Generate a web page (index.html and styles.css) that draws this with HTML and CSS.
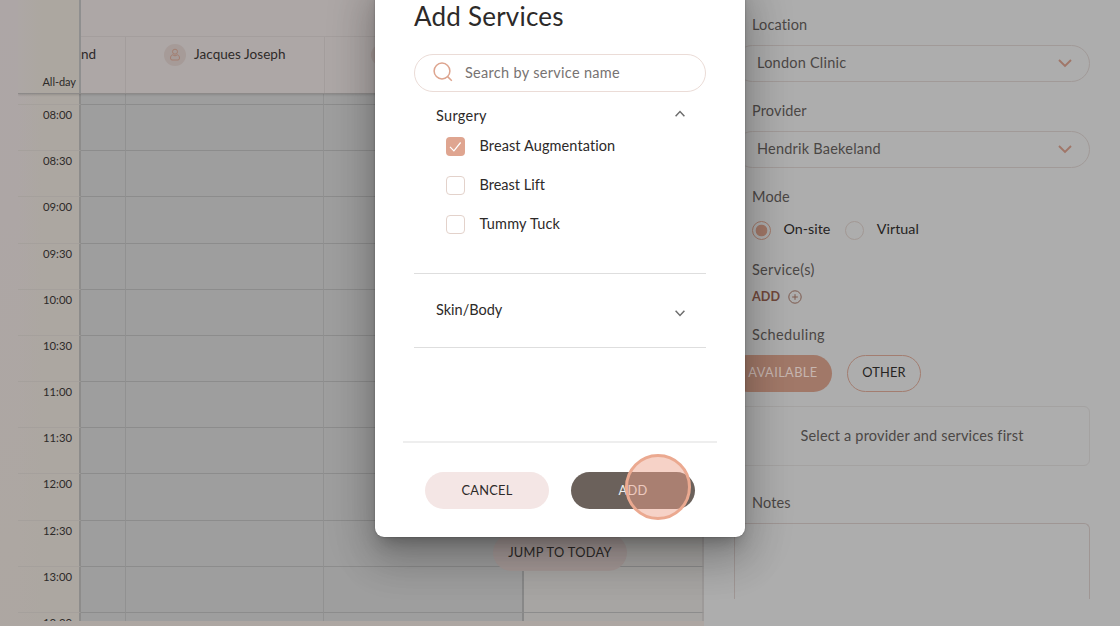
FILE: index.html
```html
<!DOCTYPE html>
<html lang="en">
<head>
<meta charset="utf-8">
<title>Add Services</title>
<link rel="stylesheet" href="styles.css">
</head>
<body>
<main class="app">
  <section class="calendar">
    <div class="cal-clip">
      <header class="cal-head">
        <div class="all-day">All-day</div>
        <div class="head-main">
          <div class="head-date"></div>
          <div class="head-people">
            <div class="person first"><span class="name">nd</span></div>
            <div class="person second">
              <span class="avatar"><svg viewBox="0 0 22 22"><circle cx="11" cy="7.7" r="2.5"/><path d="M8.6 10.8 C7.2 11.2 6.5 12.4 6.5 14 Q6.5 16 8 16 H14 Q15.500 16 15.500 14 C15.500 12.400 14.800 11.200 13.400 10.800 Q11 13 8.600 10.800Z"/></svg></span>
              <span class="name jj">Jacques Joseph</span>
            </div>
            <div class="person third"><span class="avatar"></span></div>
            <div class="person"></div>
          </div>
        </div>
      </header>
      <div class="row short"><span class="time"></span><i></i><i></i><i></i><i class="open"></i></div>
      <div class="row"><span class="time">08:00</span><i></i><i></i><i></i><i class="open"></i></div>
      <div class="row"><span class="time">08:30</span><i></i><i></i><i></i><i class="open"></i></div>
      <div class="row"><span class="time">09:00</span><i></i><i></i><i></i><i class="open"></i></div>
      <div class="row"><span class="time">09:30</span><i></i><i></i><i></i><i class="open"></i></div>
      <div class="row"><span class="time">10:00</span><i></i><i></i><i></i><i class="open"></i></div>
      <div class="row"><span class="time">10:30</span><i></i><i></i><i></i><i class="open"></i></div>
      <div class="row"><span class="time">11:00</span><i></i><i></i><i></i><i class="open"></i></div>
      <div class="row"><span class="time">11:30</span><i></i><i></i><i></i><i class="open"></i></div>
      <div class="row"><span class="time">12:00</span><i></i><i></i><i></i><i class="open"></i></div>
      <div class="row"><span class="time">12:30</span><i></i><i></i><i></i><i class="open"></i></div>
      <div class="row"><span class="time">13:00</span><i></i><i></i><i></i><i class="open"></i></div>
      <div class="row"><span class="time">13:30</span><i></i><i></i><i></i><i class="open"></i></div>
    </div>
    <button class="today">JUMP TO TODAY</button>
  </section>

  <aside class="panel">
    <div class="label l-location">Location</div>
    <div class="select"><span class="t-london">London Clinic</span><svg viewBox="0 0 14 9"><path d="M1 1 L7 7 L13 1"/></svg></div>
    <div class="label l-provider">Provider</div>
    <div class="select"><span class="t-hendrik">Hendrik Baekeland</span><svg viewBox="0 0 14 9"><path d="M1 1 L7 7 L13 1"/></svg></div>
    <div class="label l-mode">Mode</div>
    <div class="radios">
      <span class="radio on"></span><span class="r-text onsite">On-site</span>
      <span class="radio"></span><span class="r-text virtual">Virtual</span>
    </div>
    <div class="label l-services">Service(s)</div>
    <div class="add-link"><span>ADD</span><svg viewBox="0 0 14 14"><circle cx="7" cy="7" r="6.200"/><path d="M7 4.200 V9.800 M4.200 7 H9.800"/></svg></div>
    <div class="label l-sched">Scheduling</div>
    <div class="chips"><span class="chip filled">AVAILABLE</span><span class="chip">OTHER</span></div>
    <div class="hint"><span>Select a provider and services first</span></div>
    <div class="label l-notes">Notes</div>
    <div class="notes"></div>
  </aside>
</main>

<div class="modal">
  <h1>Add Services</h1>
  <div class="search"><svg viewBox="0 0 20 20"><circle cx="9" cy="9" r="7.900"/><path d="M14.600 14.600 L18.800 18.800"/></svg><span>Search by service name</span></div>
  <div class="group">
    <div class="group-head"><span class="g-surgery">Surgery</span><svg viewBox="0 0 10 8"><path d="M.6 6.200 L5 1.600 L9.400 6.200"/></svg></div>
    <div class="option"><span class="box checked"><svg viewBox="0 0 19 19"><path d="M4 9.800 L7.900 13.800 L14.600 5.500"/></svg></span><span class="o-aug">Breast Augmentation</span></div>
    <div class="option"><span class="box"></span><span class="o-lift">Breast Lift</span></div>
    <div class="option"><span class="box"></span><span class="o-tuck">Tummy Tuck</span></div>
  </div>
  <div class="group closed">
    <span class="g-skin">Skin/Body</span><svg viewBox="0 0 10 8"><path d="M.6 1.800 L5 6.400 L9.400 1.800"/></svg>
  </div>
  <div class="actions">
    <button class="btn cancel">CANCEL</button>
    <button class="btn add">ADD</button>
    <span class="tap"></span>
  </div>
</div>
</body>
</html>
```
FILE: styles.css
```css
* { box-sizing: border-box; }
body {
  margin: 0;
  width: 1120px;
  height: 626px;
  overflow: hidden;
  position: relative;
  font: 14.500px/20px Lato, "Open Sans", sans-serif;
  font-variant-ligatures: none;
  color: #2d2a29;
}
button { border: 0; padding: 0; font: inherit; color: inherit; }
svg { display: block; fill: none; flex: none; }
.app { display: flex; height: 626px; }

.calendar {
  position: relative;
  width: 704px;
  flex: none;
  padding-left: 18px;
  background: linear-gradient(172deg, #ada6a6 0%, #ada6a5 30%, #ada7a2 75%, #ada6a2 100%);
}
.cal-clip { height: 621px; overflow: hidden; }
.cal-head {
  display: flex;
  height: 94px;
  border-bottom: 1.500px solid #8d8a89;
  box-shadow: 0 1px 2px rgba(0, 0, 0, .14);
  position: relative;
}
.all-day {
  width: 63px;
  padding: 72px 3px 0 0;
  text-align: right;
  font-size: 11px;
  letter-spacing: -.05px;
  background: linear-gradient(90deg, #ada7a5, #aca7a0 40%);
  border-right: 2px solid #8f8f8f;
}
.head-main { flex: 1; background: #ada7a6; }
.head-date { height: 37px; border-bottom: 1px solid #a49e9d; }
.head-people { display: grid; grid-template-columns: 45px 199px 199px 1fr; height: 56px; }
.person { display: flex; align-items: flex-start; padding-top: 7px; border-right: 1px solid #a39d9c; font-size: 13.500px; }
.second { padding-left: 38px; }
.third { padding-left: 46px; }
.avatar { width: 22px; height: 22px; border-radius: 50%; background: #a69b98; flex: none; }
.avatar svg { width: 22px; height: 22px; stroke: #a37e70; stroke-width: 1; }
.name.jj { margin-left: 8px; letter-spacing: .05px; }

.row { display: grid; grid-template-columns: 63px 45px 198px 200px 1fr; height: 46.180px; }
.row.short { height: 10px; }
.row i { border-top: 1px solid #8c8c8c; border-right: 1px solid #919191; background: #9e9e9e; }
.row i:nth-of-type(3) { border-right: 2px solid #888; }
.row i.open { background: #a7a5a3; border-right: 2px solid #9d9a99; }
.row.short i { border-top: 0; }
.time {
  border-top: 1px solid #a5a09c;
  border-right: 2px solid #8d8c8b;
  padding-right: 7px;
  text-align: right;
  font-size: 11.300px;
  background: linear-gradient(90deg, transparent, #aca7a1 40%);
}
.row.short .time { border-top: 0; }
.today {
  position: absolute;
  left: 493px;
  top: 534px;
  width: 134px;
  height: 37px;
  padding-bottom: 2px;
  border-radius: 19px;
  background: #a69a98;
  font-size: 12.800px;
  letter-spacing: .3px;
}

.panel { width: 416px; background: #adadad; color: #4b4745; padding: 15px 30px 0; }
.label { height: 20px; padding-left: 18px; letter-spacing: .15px; }
.select {
  height: 37px;
  margin: 10px 0 19px;
  padding: 0 17px 0 22px;
  border: 1px solid #a19a98;
  border-radius: 19px;
  display: flex;
  align-items: center;
  justify-content: space-between;
  letter-spacing: .22px;
}
.select span { margin-top: -1px; }
.select svg { width: 14px; height: 9px; stroke: #a07668; stroke-width: 1.900; }
.radios { display: flex; height: 24px; margin-top: 11px; padding-left: 18px; }
.radio { width: 19px; height: 19px; border: 1.500px solid #a29894; border-radius: 50%; margin-top: 3px; flex: none; }
.radio.on { border-color: #a17868; background: radial-gradient(circle, #a17868 5.500px, transparent 6.200px); }
.r-text { margin: 1px 0 0 12.500px; color: #252322; font-size: 14.300px; }
.onsite { margin-right: 15px; }
.l-services { margin-top: 17px; padding-top: 1px; letter-spacing: .3px; }
.add-link { display: flex; align-items: center; height: 20px; margin: 8px 0 17px; padding-left: 18px; color: #70483b; font-weight: 700; font-size: 12.600px; letter-spacing: .1px; }
.add-link svg { width: 14px; height: 14px; margin-left: 8px; stroke: #7d5a4e; stroke-width: 1; }
.l-sched { padding-top: 1px; letter-spacing: .38px; }
.chips { display: flex; gap: 15px; height: 37px; margin-top: 11px; margin-left: -5px; }
.chip {
  height: 37px;
  width: 74px;
  border: 1px solid #a37d70;
  border-radius: 19px;
  line-height: 33px;
  text-align: center;
  font-size: 12.800px;
  letter-spacing: .2px;
  color: #252322;
}
.chip.filled { width: 103px; background: #a17868; border: 0; line-height: 35px; color: #c6b5af; padding-left: 5px; letter-spacing: .4px; }
.hint { height: 60px; margin-top: 14px; border: 1px solid #a4a2a1; border-radius: 6px; text-align: center; line-height: 58px; letter-spacing: .17px; }
.l-notes { margin-top: 26px; padding-top: 1px; }
.notes { height: 76px; margin-top: 11px; border: 1px solid #9f9694; border-bottom: 0; border-radius: 6px 6px 0 0; }

.modal {
  position: absolute;
  left: 375px;
  top: -20px;
  width: 370px;
  height: 557px;
  padding: 20px 39px 0;
  border-radius: 9px;
  background: #fff;
  box-shadow: 0 11px 15px -7px rgba(0, 0, 0, .25), 0 24px 38px 3px rgba(0, 0, 0, .16), 0 9px 46px 8px rgba(0, 0, 0, .14), 0 0 2px rgba(0, 0, 0, .3);
}
h1 { margin: 0; height: 54px; font-size: 26px; line-height: 32px; font-weight: 400; letter-spacing: .22px; }
.search { display: flex; align-items: center; height: 38px; padding-left: 18px; border: 1px solid #ebdcd7; border-radius: 19px; color: #777372; letter-spacing: .3px; }
.search span { margin-top: -1px; }
.search svg { width: 20px; height: 20px; margin: -2px 12px 0 0; stroke: #dda48e; stroke-width: 1.500; }
.group { height: 182px; padding: 14px 21px 0 22px; border-bottom: 1px solid #dedede; }
.group-head { display: flex; justify-content: space-between; height: 20px; letter-spacing: .3px; }
.group svg { stroke: #6d6d6d; stroke-width: 1.500; width: 10px; height: 8px; }
.group-head svg { margin-top: 4px; }
.option { display: flex; align-items: center; height: 39px; padding-left: 10px; }
.option > span:last-child { margin-top: -1px; }
.o-aug { letter-spacing: .1px; }
.o-tuck { letter-spacing: .2px; }
.group-head + .option { margin-top: 1px; }
.box { width: 19px; height: 19px; margin-right: 14.500px; border: 1px solid #e3d2cb; border-radius: 4px; flex: none; }
.box.checked { background: #dfa590; border: 0; }
.group .box.checked svg { width: 19px; height: 19px; stroke: #fff; stroke-width: 1.200; }
.group.closed { display: flex; justify-content: space-between; height: 74px; padding-top: 26px; }
.closed svg { margin-top: 9px; }
.actions { position: relative; display: flex; justify-content: space-between; margin: 93px -11px 0; padding: 29px 22px 0; border-top: 2px solid #eee; }
.btn { width: 124px; height: 37px; padding-bottom: 2px; border-radius: 19px; font-size: 12.800px; letter-spacing: .25px; }
.cancel { background: #f4e6e5; }
.add { background: #6b615b; color: #eee; }
.tap { position: absolute; left: 222px; top: 11px; width: 66px; height: 66px; border-radius: 50%; border: 3px solid #eba990; background: rgba(236, 160, 138, .48); }
```
